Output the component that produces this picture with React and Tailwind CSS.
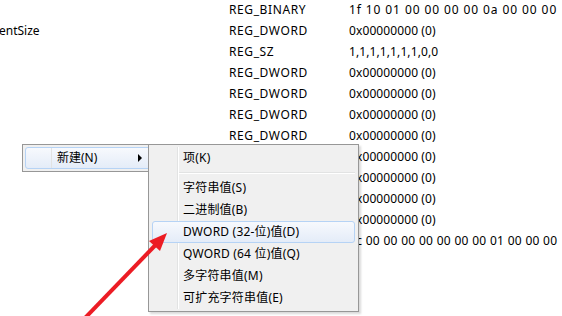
const rows = [
  { name: '', type: 'REG_BINARY', value: '1f 10 01 00 00 00 00 0a 00 00 00', track: 'tracking-[0.9px]' },
  { name: 'entSize', type: 'REG_DWORD', value: '0x00000000 (0)' },
  { name: '', type: 'REG_SZ', value: '1,1,1,1,1,1,1,0,0' },
  { name: '', type: 'REG_DWORD', value: '0x00000000 (0)' },
  { name: '', type: 'REG_DWORD', value: '0x00000000 (0)' },
  { name: '', type: 'REG_DWORD', value: '0x00000000 (0)' },
  { name: '', type: 'REG_DWORD', value: '0x00000000 (0)' },
  { name: '', type: 'REG_DWORD', value: '0x00000000 (0)' },
  { name: '', type: 'REG_DWORD', value: '0x00000000 (0)' },
  { name: '', type: 'REG_DWORD', value: '0x00000000 (0)' },
  { name: '', type: 'REG_DWORD', value: '0x00000000 (0)' },
  { name: '', type: 'REG_BINARY', value: '0c 00 00 00 00 00 00 00 01 00 00 00', track: 'tracking-[0.3px]' },
];

const subItems = [
  '字符串值(S)',
  '二进制值(B)',
  'DWORD (32-位)值(D)',
  'QWORD (64 位)值(Q)',
  '多字符串值(M)',
  '可扩充字符串值(E)',
];

function MenuItem({ label, active }) {
  return (
    <div
      className={
        'mx-[3px] flex h-[22px] items-center rounded-[3px] border pl-[30px] tracking-[0.2px] ' +
        (active
          ? 'border-[#b6d3f5] bg-gradient-to-b from-[#f7f9fd] to-[#e4ecf8]'
          : 'border-transparent')
      }
    >
      {label}
    </div>
  );
}

export default function App() {
  return (
    <div
      className="relative h-[316px] w-[562px] overflow-hidden bg-white text-[12px] text-black"
      style={{ fontFamily: '"Noto Sans", "Noto Sans CJK SC", sans-serif' }}
    >
      {/* value list */}
      <div className="-mt-[1px] flex flex-col">
        {rows.map((r, i) => (
          <div key={i} className="flex h-[21px] items-center whitespace-nowrap">
            <div className="-ml-[1px] w-[230px]">{r.name}</div>
            <div className="w-[120px] tracking-[0.6px]">{r.type}</div>
            <div className={r.track || 'tracking-[0.1px]'}>{r.value}</div>
          </div>
        ))}
      </div>

      {/* first context menu */}
      <div className="absolute left-[22px] top-[144px] h-[28px] w-[132px] border border-[#979797] bg-[#f0f0f0] pt-[2px]">
        <div className="relative ml-[2px] flex h-[22px] items-center rounded-[3px] border border-[#b6d3f5] bg-gradient-to-b from-[#f7f9fd] to-[#e4ecf8] pl-[31px]">
          <span className="absolute left-[25px] top-0 h-full w-px bg-[#e2e3e3]" />
          <span>新建(N)</span>
          <span className="absolute left-[112px] top-[6px] h-0 w-0 border-y-[4px] border-l-[4px] border-y-transparent border-l-black" />
        </div>
      </div>

      {/* sub menu */}
      <div className="absolute left-[148px] top-[144px] w-[211px] border border-[#979797] bg-[#f0f0f0] py-[2px] shadow-[2px_2px_2px_rgba(0,0,0,0.15)]">
        <div className="absolute bottom-[2px] left-[28px] top-[2px] flex">
          <span className="w-px bg-[#e2e3e3]" />
          <span className="w-px bg-white" />
        </div>
        <div className="relative">
          <MenuItem label="项(K)" />
          <div className="flex h-[8px] flex-col justify-center pl-[30px] pr-[3px]">
            <div className="h-px bg-[#e2e3e3]" />
            <div className="h-px bg-white" />
          </div>
          {subItems.map((s) => (
            <MenuItem key={s} label={s} active={s.startsWith('DWORD')} />
          ))}
        </div>
      </div>

      {/* red arrow */}
      <svg className="pointer-events-none absolute left-0 top-0" width="562" height="316">
        <line x1="85" y1="318" x2="156" y2="244.5" stroke="#ec1c24" strokeWidth="4" />
        <polygon points="167,233 160,251 149,241" fill="#ec1c24" />
      </svg>
    </div>
  );
}
